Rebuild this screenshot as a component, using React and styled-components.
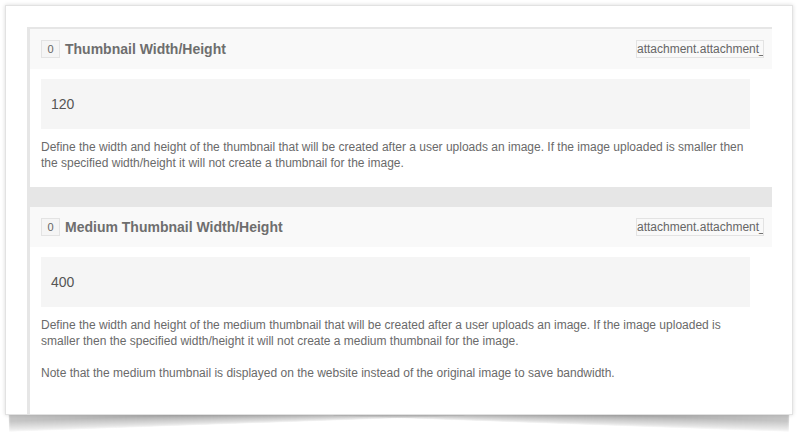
import React from 'react';
import styled, {createGlobalStyle} from 'styled-components';

const GlobalStyle = createGlobalStyle`
  html {
    background: #fff;
  }
  body {
    margin: 0;
    font-family: "Liberation Sans", Arial, sans-serif;
  }
`;

const settings = [
    {
        id: 1,
        title: 'Thumbnail Width/Height',
        key: 'attachment.attachment_thumbnail',
        value: '120',
        notes: [
            'Define the width and height of the thumbnail that will be created after a user uploads an image. If the image uploaded is smaller then the specified width/height it will not create a thumbnail for the image.',
        ],
    },
    {
        id: 2,
        title: 'Medium Thumbnail Width/Height',
        key: 'attachment.attachment_medium',
        value: '400',
        notes: [
            'Define the width and height of the medium thumbnail that will be created after a user uploads an image. If the image uploaded is smaller then the specified width/height it will not create a medium thumbnail for the image.',
            'Note that the medium thumbnail is displayed on the website instead of the original image to save bandwidth.',
        ],
    },
];

const SettingBlock = ({setting}) => (
    <Section>
        <Header>
            <Badge>0</Badge>
            <Title>{setting.title}</Title>
            <KeyField readOnly value={setting.key}/>
        </Header>
        <ValueBox>{setting.value}</ValueBox>
        <Notes>
            {setting.notes.map((note, i) => (
                <p key={i}>{note}</p>
            ))}
        </Notes>
    </Section>
);

const App = () => (
    <Page>
        <GlobalStyle/>
        <Card>
            <Stack>
                {settings.map((setting) => (
                    <SettingBlock key={setting.id} setting={setting}/>
                ))}
            </Stack>
        </Card>
    </Page>
);

export default App;

const Page = styled.div`
  padding: 5px 14px 24px 5px;
`;

// the curled-page shadow sits under the card's bottom corners
const Card = styled.div`
  position: relative;
  width: 745px;
  height: 387px;
  padding: 21px 20px 0 21px;
  background: #fff;
  border: 1px solid #e2e2e2;
  box-shadow: 0 0 4px rgba(0, 0, 0, 0.15);

  &::before,
  &::after {
    content: "";
    position: absolute;
    z-index: -1;
    bottom: -18px;
    width: 58%;
    height: 24px;
    filter: blur(0.8px);
    -webkit-mask-image: linear-gradient(to bottom, #000 55%, rgba(0, 0, 0, 0.15));
  }
  &::before {
    left: 3px;
    transform: rotate(-2deg);
    transform-origin: left bottom;
    background: linear-gradient(to right, #c6c6c6, #8c8c8c 80%);
  }
  &::after {
    right: 3px;
    transform: rotate(2deg);
    transform-origin: right bottom;
    background: linear-gradient(to left, #c6c6c6, #8c8c8c 80%);
  }
`;

const Stack = styled.div`
  display: flex;
  flex-direction: column;
  gap: 20px;
  height: 100%;
  padding: 2px 0 0 3px;
  background: #e6e6e6;
  box-sizing: border-box;
  overflow: hidden;
`;

const Section = styled.div`
  background: #fff;
  flex: none;
  &:last-child {
    flex: 1;
  }
`;

const Header = styled.div`
  display: flex;
  align-items: center;
  height: 40px;
  padding: 0 8px 0 11px;
  background: #f9f9f9;
`;

const Badge = styled.span`
  display: inline-flex;
  align-items: center;
  justify-content: center;
  width: 17px;
  height: 16px;
  border: 1px solid #e3e3e3;
  background: #f5f5f5;
  font-size: 11px;
  color: #666;
`;

const Title = styled.span`
  flex: 1;
  margin-left: 5px;
  font-size: 14px;
  font-weight: bold;
  color: #6e6e6e;
`;

const KeyField = styled.input`
  width: 126px;
  height: 16px;
  padding: 0;
  border: 1px solid #e3e3e3;
  background: #f9f9f9;
  font-family: "Liberation Sans", Arial, sans-serif;
  font-size: 12px;
  color: #666;
  outline: none;
`;

const ValueBox = styled.div`
  display: flex;
  align-items: center;
  height: 50px;
  margin: 10px 22px 0 11px;
  padding-left: 10px;
  background: #f5f5f5;
  font-size: 14px;
  color: #555;
`;

const Notes = styled.div`
  padding: 10px 22px 16px 11px;
  font-size: 12px;
  line-height: 16px;
  color: #6a6a6a;

  p {
    margin: 0 0 16px;
  }
  p:last-child {
    margin-bottom: 0;
  }
`;
